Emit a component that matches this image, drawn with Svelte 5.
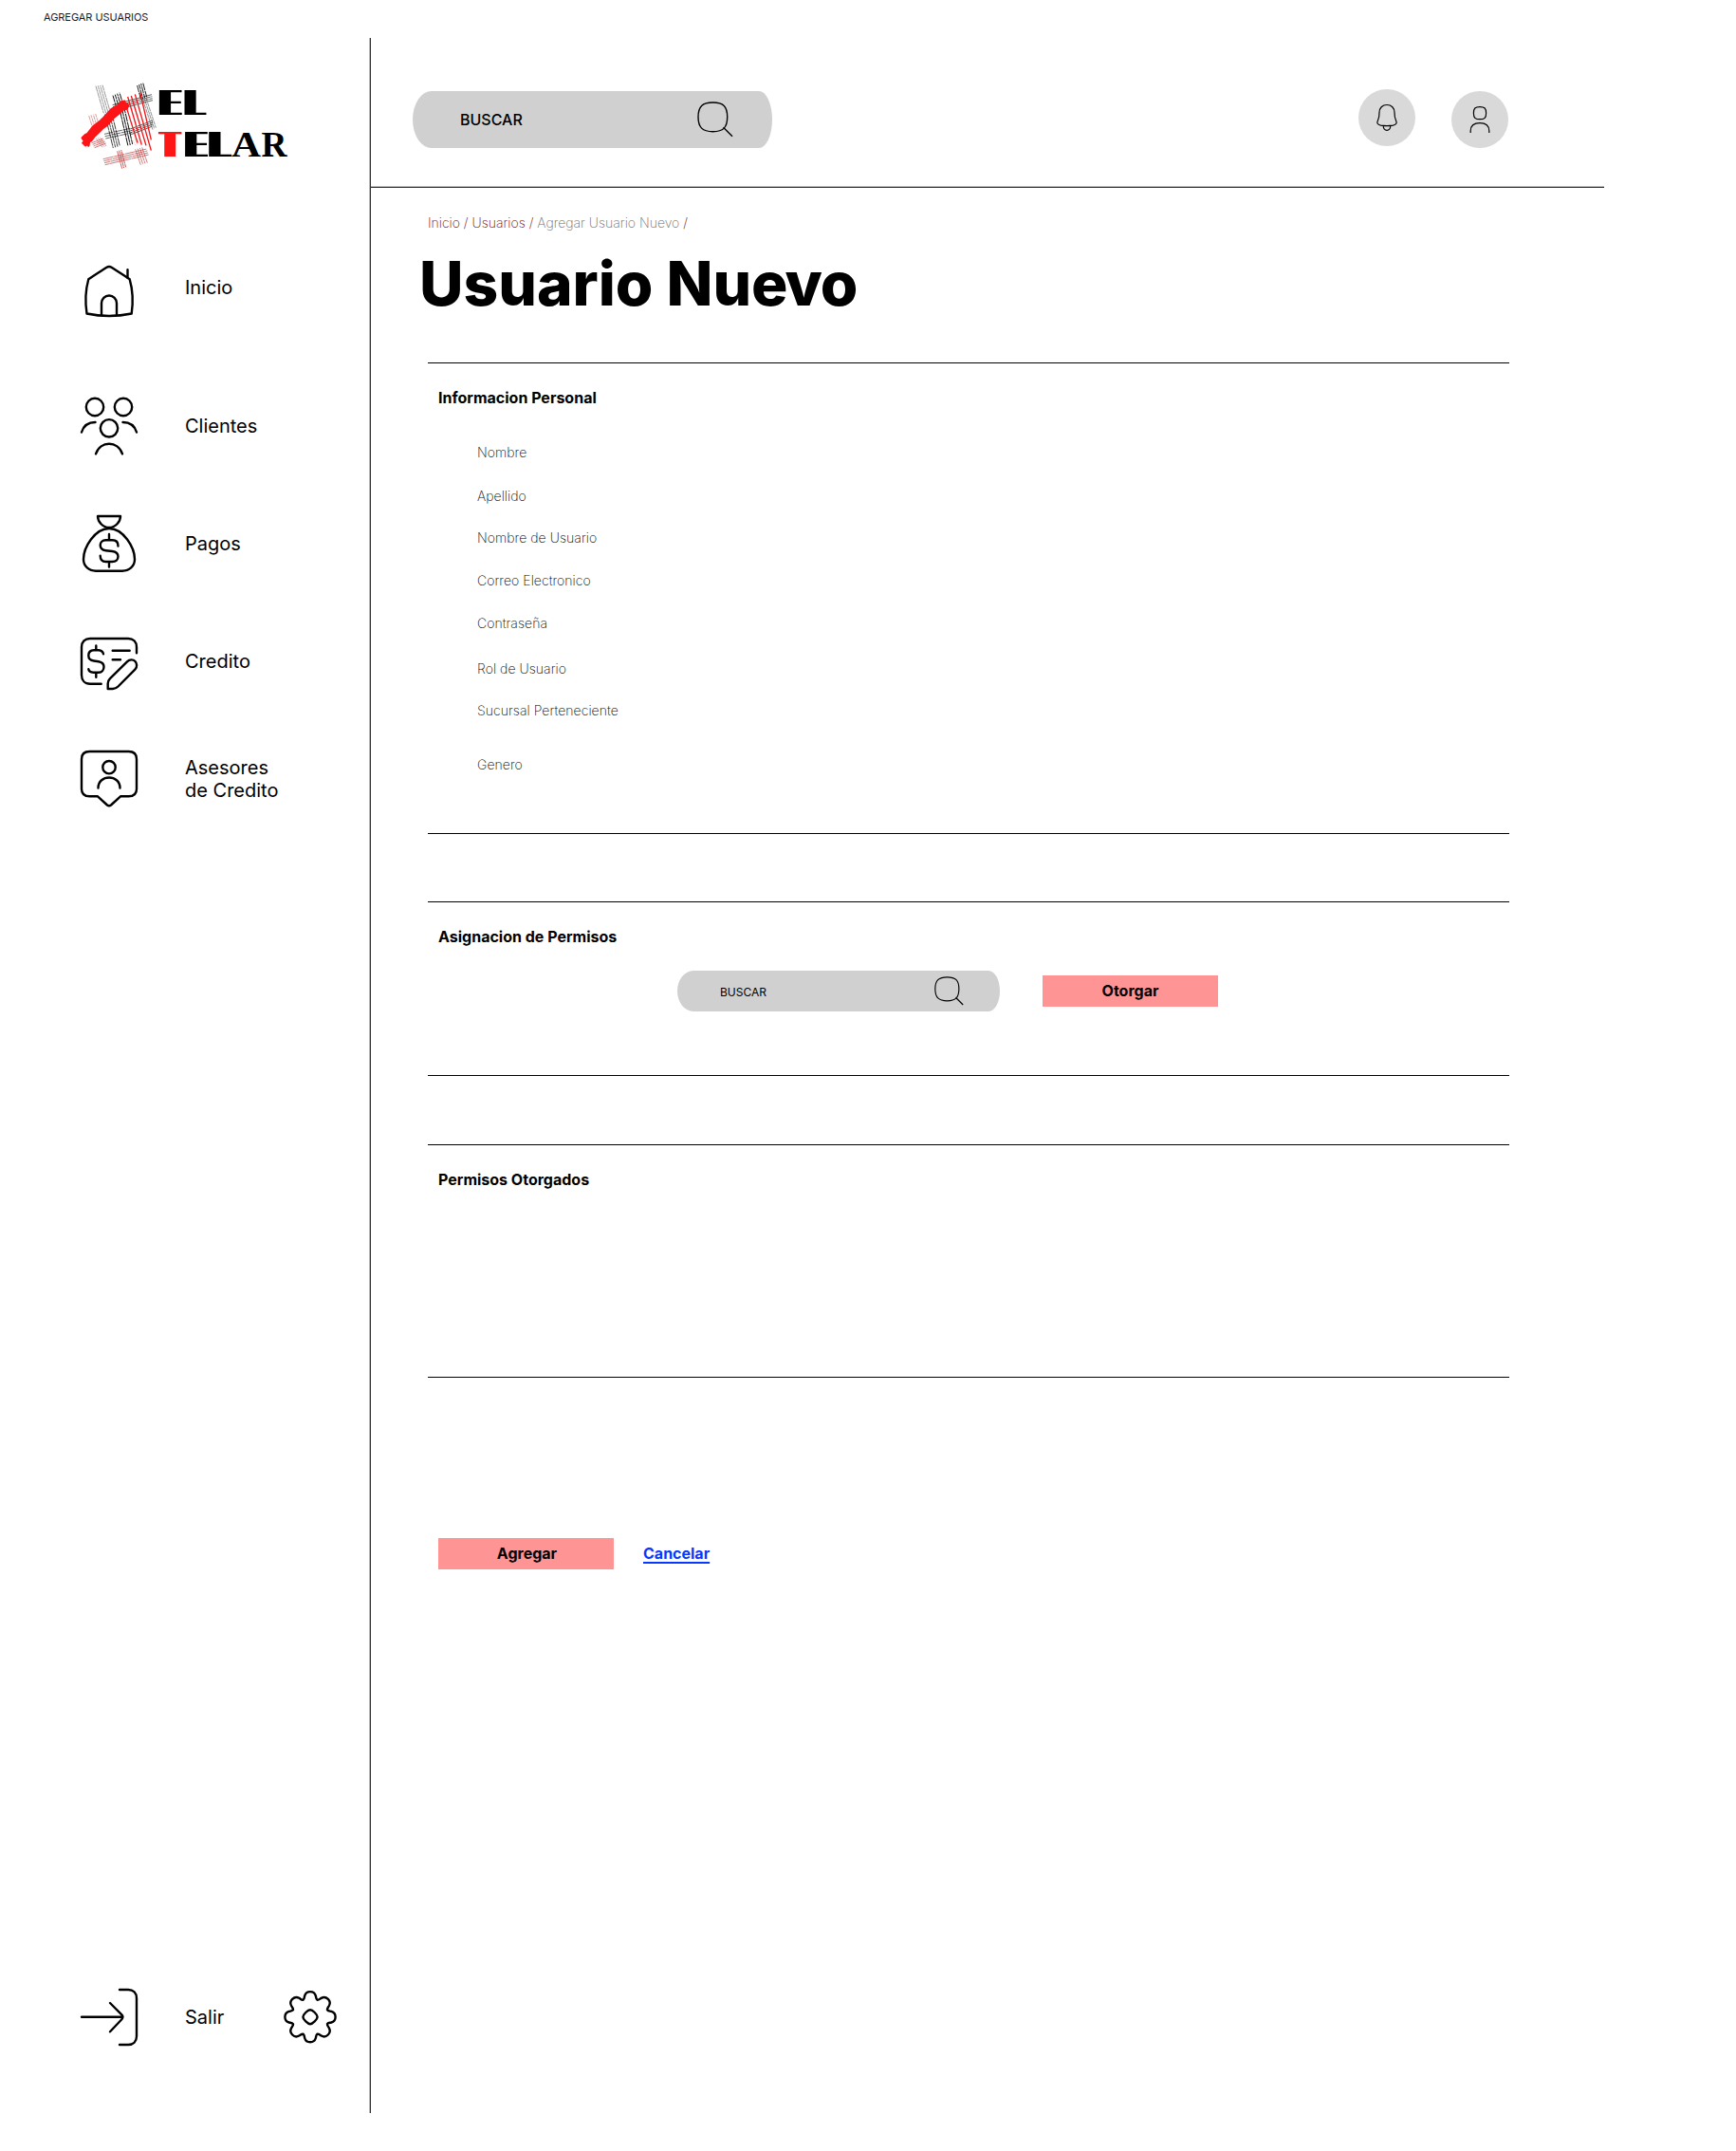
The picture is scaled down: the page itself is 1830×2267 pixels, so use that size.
<script>
  const nav = [
    { id: 'inicio', label: 'Inicio' },
    { id: 'clientes', label: 'Clientes' },
    { id: 'pagos', label: 'Pagos' },
    { id: 'credito', label: 'Credito' },
    { id: 'asesores', label: 'Asesores\nde Credito' }
  ];

  const fields = [
    'Nombre',
    'Apellido',
    'Nombre de Usuario',
    'Correo Electronico',
    'Contraseña',
    'Rol de Usuario',
    'Sucursal Perteneciente',
    'Genero'
  ];

  // Woven threads of the brand mark: start, end, step between threads, count, colour, width
  const threads = [
    { a: [63, 32], b: [88, 118], d: [7, -1], n: 4, c: '#555', w: 1.8, dash: '19 1.5' },
    { a: [92, 122], b: [118, 228], d: [7, -2], n: 4, c: '#111', w: 2.4, dash: '24 2' },
    { a: [117, 62], b: [132, 112], d: [7, -3], n: 4, c: '#000', w: 2.8, dash: '22 2' },
    { a: [140, 112], b: [165, 222], d: [7, -3], n: 3, c: '#000', w: 2.8, dash: '26 2' },
    { a: [194, 30], b: [206, 76], d: [6, -3], n: 4, c: '#000', w: 2.6, dash: '22 2' },
    { a: [212, 76], b: [243, 170], d: [5, -3], n: 3, c: '#444', w: 1.8, dash: '13 2' },
    { a: [116, 92], b: [240, 59], d: [1, 6], n: 4, c: '#111', w: 2, dash: '31 2' },
    { a: [90, 184], b: [172, 166], d: [2, 7], n: 3, c: '#111', w: 1.9, dash: '28 2' },
    { a: [172, 168], b: [243, 141], d: [0, 6], n: 4, c: '#111', w: 2.1, dash: '22 2' },
    { a: [41, 126], b: [58, 180], d: [7, -2], n: 4, c: '#b55', w: 1.7, dash: '15 2' },
    { a: [50, 212], b: [86, 198], d: [3, 5], n: 4, c: '#b33', w: 2, dash: '20 1' },
    { a: [64, 198], b: [84, 226], d: [6, -2], n: 3, c: '#c44', w: 1.6, dash: '17 1' },
    { a: [86, 263], b: [224, 231], d: [2, 6], n: 4, c: '#b33a3a', w: 2, dash: '34 1.5' },
    { a: [131, 238], b: [146, 293], d: [6, -2], n: 3, c: '#b22', w: 2.2, dash: '19 1' },
    { a: [188, 232], b: [205, 281], d: [7, -2], n: 4, c: '#b33', w: 1.9, dash: '18 1' },
    { a: [180, 203], b: [190, 222], d: [6, -3], n: 3, c: '#dba0a0', w: 1.2, dash: '5 2' }
  ].flatMap((t) =>
    Array.from({ length: t.n }, (_, i) => ({
      x1: t.a[0] + t.d[0] * i,
      y1: t.a[1] + t.d[1] * i,
      x2: t.b[0] + t.d[0] * i,
      y2: t.b[1] + t.d[1] * i,
      c: t.c,
      w: t.w,
      dash: t.dash,
      shift: i * 7
    }))
  );

  // Eight rounded teeth, each one the same curve turned by 45 degrees
  function gearPath(cx, cy) {
    const tooth = [
      [-6, -19.2], [-6.3, -20.6], [-5.8, -22.3],
      [-5, -25.2], [-2.8, -26.6], [0, -26.6],
      [2.8, -26.6], [5, -25.2], [5.8, -22.3],
      [6.3, -20.6], [6, -19.2], [7.4, -18]
    ];
    const turn = ([x, y], k) => {
      const r = (k * Math.PI) / 4;
      const px = cx + x * Math.cos(r) - y * Math.sin(r);
      const py = cy + x * Math.sin(r) + y * Math.cos(r);
      return px.toFixed(2) + ' ' + py.toFixed(2);
    };
    let d = 'M' + turn([-7.4, -18], 0);
    for (let k = 0; k < 8; k++) {
      for (let i = 0; i < 12; i += 3) {
        d += 'C' + tooth.slice(i, i + 3).map((p) => turn(p, k)).join(' ');
      }
    }
    return d + 'Z';
  }
  const gear = gearPath(30, 29.7);
</script>

{#snippet lens()}
  <svg class="lens" viewBox="0 0 38 38" aria-hidden="true">
    <path d="M16.5 1C27.5 1 31.7 5.3 31.7 16.3S27.5 31.7 16.5 31.7 1 27.3 1 16.3 5.5 1 16.5 1ZM27.5 27.3 37 36.8" />
  </svg>
{/snippet}

<div class="page">
  <p class="frame-name">AGREGAR USUARIOS</p>

  <div class="shell">
    <aside class="sidebar">
      <svg class="logo" viewBox="0 0 230 105" role="img" aria-label="El Telar">
        <!-- Widens upright strokes only, for a deco face with fat stems and hairline arms -->
        <filter id="fat-stems" filterUnits="userSpaceOnUse" x="70" y="0" width="160" height="105">
          <feMorphology operator="dilate" radius="5 0" />
        </filter>
        <g transform="scale(.3333)">
          {#each threads as t}
            <line x1={t.x1} y1={t.y1} x2={t.x2} y2={t.y2} stroke={t.c} stroke-width={t.w} stroke-dasharray={t.dash} stroke-dashoffset={t.shift} />
          {/each}
          <g stroke="#f01418" stroke-width="4">
            <path d="M160 100 195 212M164 66 208 218M175 63 222 220M187 58 238 236M203 52 238 202" />
          </g>
          <path
            class="brush"
            d="M20 196 30 186 37 183 55 160 78 142 88 132 112 106 135 92 143 82 154 80 154 85 166 92 161 104 150 106 140 116 122 130 108 145 98 156 84 166 72 178 58 192 48 205 42 208 40 221 35 214 31 220 22 212 27 206Z"
          />
        </g>
        <g class="word" filter="url(#fat-stems)">
          <text x="89.700" y="40.7" textLength="19.2" lengthAdjust="spacingAndGlyphs">E</text>
          <text x="116.400" y="40.7" textLength="17.6" lengthAdjust="spacingAndGlyphs">L</text>
          <text class="accent" x="90.6" y="84.7" textLength="17.4" lengthAdjust="spacingAndGlyphs">T</text>
          <text x="117" y="84.7" textLength="19.2" lengthAdjust="spacingAndGlyphs">E</text>
          <text x="142" y="84.7" textLength="18.8" lengthAdjust="spacingAndGlyphs">L</text>
        </g>
        <g class="word serif">
          <text x="164" y="84.7" textLength="31" lengthAdjust="spacingAndGlyphs">A</text>
          <text x="195.500" y="84.7" textLength="27" lengthAdjust="spacingAndGlyphs">R</text>
        </g>
      </svg>

      <nav class="menu">
        {#each nav as item}
          <a class="item {item.id}">
            <svg class="icon" viewBox="0 0 60 60" aria-hidden="true">
              {#if item.id === 'inicio'}
                <path d="M8.3 21.3C14 17.300 21 13 27.500 8.800Q30 7.300 32.500 8.800C39 13 46 17.300 51.700 21.300 54.800 32 55.500 45 53.700 57.500 38 60.800 22 60.800 6.500 57.500 4.600 45 5.300 32 8.300 21.300Z" />
                <path d="M49.500 11.300V19.500M22 59V46.500A8 8 0 0 1 38 46.500V59" />
              {:else if item.id === 'clientes'}
                <circle cx="15" cy="10" r="9.200" />
                <circle cx="45" cy="10" r="9.200" />
                <circle cx="30" cy="32.300" r="9.200" />
                <path d="M1 36.500C3 30 8 26 15.500 26M59 36.500C57 30 52 26 44.500 26M16 59.300C20.500 45.200 39.500 45.200 44 59.300" />
              {:else if item.id === 'pagos'}
                <path d="M18 1H42C42 7 36.500 13 30 13S18 7 18 1Z" />
                <path d="M30 14C45 14 57 34 57 46.500 57 54 51 58.700 44 58.700H16C9 58.700 3 54 3 46.500 3 34 15 14 30 14Z" />
                <path d="M30 20V26M30 49.300V54.500M39.500 32.500C39.500 28.500 37 26.300 33.500 26.300H26.500C23 26.300 20.700 28.500 20.700 31.500 20.700 35 23 36.800 26.500 37.200L33.500 38C37 38.500 39.500 40 39.500 43.500 39.500 47 37 49 33.500 49H26.500C23 49 20.700 47 20.700 42.800" />
              {:else if item.id === 'credito'}
                <path d="M59 21.300V15C59 9.500 55.500 6 50 6H10C4.500 6 1 9.500 1 15V44.500C1 50 4.500 53.700 10 53.700H21.700M33.700 18.700H51.700M33.700 28.300H42" />
                <path d="M16.300 13.500V18.300M16.300 41.700V46.800M24 22.300C23.500 19.800 21.500 18.500 19 18.300H14C10.500 18.300 8.300 20.500 8.300 24S10.500 29 14 29.500L19 30.300C22.500 31 24.500 32.500 24.500 35.700S22.500 41.700 19 41.700H13.500C10.500 41.700 8.700 40.500 8.300 38.300" />
                <path d="M28.700 59V53.500Q28.700 50.500 31 48.200L49 30.300C51.500 27.800 55.500 27.800 57.500 30S59.800 36 57.500 38.300L39.500 56.500Q37 59 34 59Z" />
              {:else}
                <path d="M9.500 1H50.500C56 1 59 4 59 9V40.500C59 45.500 56 48.300 50.500 48.300H42L32 57.500Q30 59 28 57.500L18 48.300H9.500C4 48.300 1 45.500 1 40.500V9C1 4 4 1 9.500 1Z" />
                <circle cx="30" cy="17.700" r="6.700" />
                <path d="M18.500 39.500C18.500 24.800 41.500 24.800 41.500 39.500" />
              {/if}
            </svg>
            <span>{item.label}</span>
          </a>
        {/each}
      </nav>

      <div class="foot">
        <svg class="icon" viewBox="0 0 60 60" aria-hidden="true">
          <path d="M41 1H50C55.500 1 59 4.500 59 10V50C59 55.500 55.500 59 50 59H41M1 29.700H44M31 15 43.300 27.300Q45.500 29.700 43.300 32.200L31 45.300" />
        </svg>
        <span>Salir</span>
        <svg class="icon" viewBox="0 0 60 60" aria-hidden="true">
          <path d={gear} />
          <path d="M30 22.200C32.500 22.200 37.600 27.200 37.600 29.700S32.500 37.200 30 37.200 22.400 32.200 22.400 29.700 27.500 22.200 30 22.200Z" />
        </svg>
      </div>
    </aside>

    <main>
      <header class="topbar">
        <div class="search">
          <span>BUSCAR</span>
          {@render lens()}
        </div>
        <div class="round bell">
          <svg viewBox="0 0 24 30" aria-hidden="true">
            <path d="M12 1.500C16.800 1.500 20 4.800 20 9.500 20 13 20 14.500 21.300 17.300 23 20.800 21.800 22.500 18.500 23.200Q12 24.200 5.500 23.200C2.200 22.500 1 20.800 2.700 17.300 4 14.500 4 13 4 9.500 4 4.800 7.200 1.500 12 1.500ZM8.200 24C8.700 29.700 15.300 29.700 15.800 24" />
          </svg>
        </div>
        <div class="round">
          <svg viewBox="0 0 24 30" aria-hidden="true">
            <path d="M12 1.600C17 1.600 18.600 3.200 18.600 8.200S17 14.700 12 14.700 5.400 13.200 5.400 8.200 7 1.600 12 1.600ZM2.200 29V27C2.200 21.500 5.500 18.600 12 18.600S21.800 21.500 21.800 27V29" />
          </svg>
        </div>
      </header>

      <div class="content">
        <p class="crumbs">Inicio / Usuarios / <span>Agregar Usuario Nuevo</span> /</p>
        <h1>Usuario Nu<span>ev</span>o</h1>

        <section class="personal">
          <h2>Informacion Personal</h2>
          <ul>
            {#each fields as field}
              <li>{field}</li>
            {/each}
          </ul>
        </section>

        <section class="assign">
          <h2>Asignacion de Permisos</h2>
          <div class="grant">
            <div class="search small">
              <span>BUSCAR</span>
              {@render lens()}
            </div>
            <button>Otorgar</button>
          </div>
        </section>

        <section class="granted">
          <h2>Permisos Otorgados</h2>
        </section>

        <div class="actions">
          <button class="add">Agregar</button>
          <a class="cancel">Cancelar</a>
        </div>
      </div>
    </main>
  </div>
</div>

<style>
  :global(body) {
    background: #fff;
  }

  .page {
    box-sizing: border-box;
    width: 1830px;
    height: 2267px;
    font-family: Inter, 'Liberation Sans', sans-serif;
    color: #000;
  }

  p,
  h1,
  h2,
  ul {
    margin: 0;
    padding: 0;
  }

  svg {
    display: block;
    fill: none;
    stroke: #000;
    overflow: visible;
  }

  .frame-name {
    height: 40px;
    box-sizing: border-box;
    padding: 11px 0 0 46px;
    font-size: 11px;
    line-height: 14px;
    letter-spacing: -0.05px;
    color: #1c1c1c;
  }

  .shell {
    display: flex;
    width: 1691px;
    height: 2187px;
  }

  .sidebar {
    box-sizing: border-box;
    flex: none;
    display: flex;
    flex-direction: column;
    width: 391px;
    padding: 40px 0 71px;
    border-right: 1px solid #333;
    box-shadow: inset -1px 0 #bbb;
    font-size: 20px;
    line-height: 24px;
  }

  .logo {
    width: 230px;
    height: 105px;
    margin-left: 80px;
  }

  .brush {
    fill: #fc1416;
    stroke: #fc1416;
    stroke-width: 7;
    stroke-linejoin: round;
  }

  .word {
    fill: #000;
    stroke: none;
    font-size: 35px;
    font-weight: 300;
  }

  .word.serif {
    font-family: 'Liberation Serif', serif;
    font-size: 38.5px;
    font-weight: 700;
  }

  .accent {
    fill: #fc1416;
  }

  .menu {
    display: flex;
    flex-direction: column;
    gap: 64px;
    margin: 88px 0 0 85px;
  }

  .item {
    display: flex;
    align-items: center;
    gap: 50px;
    height: 60px;
    white-space: pre-line;
  }

  .item.inicio {
    margin-bottom: 22px;
  }

  .icon {
    flex: none;
    width: 60px;
    height: 60px;
    stroke-width: 2.4;
    stroke-linecap: round;
    stroke-linejoin: round;
  }

  .foot {
    display: flex;
    align-items: center;
    margin: auto 0 0 85px;
  }

  .foot span {
    width: 102px;
    margin-left: 50px;
  }

  main {
    flex: 1;
  }

  .topbar {
    box-sizing: border-box;
    display: flex;
    align-items: flex-start;
    height: 158px;
    padding: 56px 101px 0 44px;
    border-bottom: 1px solid #333;
    box-shadow: inset 0 -1px #bbb;
  }

  .topbar .search {
    margin-right: auto;
  }

  .search {
    box-sizing: border-box;
    display: flex;
    align-items: center;
    justify-content: space-between;
    width: 379px;
    height: 60px;
    padding: 0 41px 0 50px;
    border-radius: 20px 14px 14px 20px / 30px;
    background: #d0d0d0;
    font-size: 16px;
    font-weight: 500;
    line-height: 20px;
  }

  .lens {
    width: 38px;
    height: 38px;
    stroke-width: 1.4;
  }

  .search.small {
    width: 340px;
    height: 43px;
    padding: 0 38px 0 45px;
    border-radius: 17px 12px 12px 17px / 21.5px;
    font-size: 12px;
    font-weight: 400;
  }

  .small span {
    padding-top: 2px;
  }

  .small .lens {
    width: 31px;
    height: 31px;
  }

  .round {
    display: flex;
    align-items: center;
    justify-content: center;
    width: 60px;
    height: 60px;
    margin-left: 38px;
    border-radius: 50%;
    background: #d9d9d9;
  }

  .round.bell {
    margin-top: -2px;
  }

  .round svg {
    width: 24px;
    height: 30px;
    stroke-width: 1.2;
  }

  .content {
    width: 1140px;
    padding: 28px 0 0 60px;
  }

  .crumbs {
    height: 18px;
    font-size: 14px;
    font-weight: 200;
    line-height: 18px;
    color: #6a0006;
  }

  .crumbs span {
    color: #6e6e6e;
  }

  h1 {
    margin: 16px 0 44px -9px;
    font-size: 64px;
    font-weight: 800;
    line-height: 78px;
    white-space: nowrap;
  }

  /* Tighter pairs around the "v" */
  h1 span {
    letter-spacing: -2px;
  }

  section {
    box-sizing: border-box;
    margin-bottom: 71px;
    padding: 26px 0 0 11px;
    border: solid #000;
    border-width: 1px 0;
  }

  h2 {
    font-size: 16px;
    font-weight: 700;
    line-height: 20px;
  }

  .personal {
    height: 497px;
  }

  ul {
    display: grid;
    grid-template-rows: 46px 44px 45px 45px 48px 44px 57px 18px;
    margin: 39px 0 0 41px;
    font-size: 14px;
    font-weight: 200;
    line-height: 18px;
    letter-spacing: 0.05px;
    list-style: none;
  }

  .assign {
    height: 184px;
    margin-bottom: 72px;
  }

  .grant {
    display: flex;
    align-items: center;
    gap: 45px;
    margin: 26px 0 0 252px;
  }

  .granted {
    height: 246px;
    margin-bottom: 169px;
  }

  button {
    width: 185px;
    height: 33px;
    padding: 0 0 2px;
    border: 0;
    background: #ff9494;
    font: 700 16px/20px Inter, 'Liberation Sans', sans-serif;
    color: #000;
  }

  .add {
    padding-left: 2px;
  }

  .actions {
    display: flex;
    align-items: center;
    gap: 31px;
    margin-left: 11px;
  }

  .cancel {
    padding-bottom: 2px;
    font-size: 16px;
    font-weight: 700;
    line-height: 20px;
    color: #0838ff;
    text-decoration: underline;
    text-decoration-thickness: 1.5px;
    text-underline-offset: 3px;
  }
</style>
